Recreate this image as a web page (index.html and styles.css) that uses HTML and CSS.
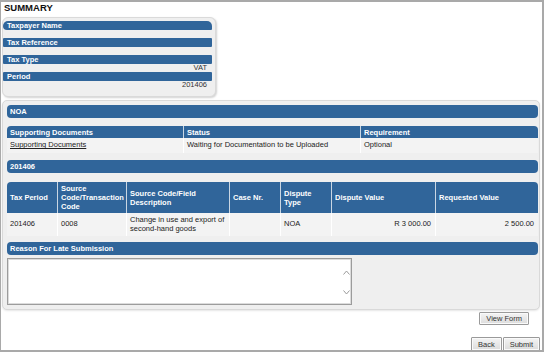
FILE: index.html
```html
<!DOCTYPE html>
<html lang="en">
<head>
    <meta charset="UTF-8">
    <meta name="viewport" content="width=device-width, initial-scale=1.0">
    <title>Summary - Dispute</title>
    <link rel="stylesheet" href="styles.css">
</head>
<body>
<div class="page">
    <h1 class="title">SUMMARY</h1>

    <div class="summary">
        <div class="sum-bar sum-bar-first">Taxpayer Name</div>
        <div class="sum-value"></div>
        <div class="sum-bar">Tax Reference</div>
        <div class="sum-value"></div>
        <div class="sum-bar">Tax Type</div>
        <div class="sum-value">VAT</div>
        <div class="sum-bar">Period</div>
        <div class="sum-value">201406</div>
    </div>

    <div class="panel">
        <div class="section-bar">NOA</div>

        <table class="grid docs">
            <colgroup>
                <col style="width:176px">
                <col style="width:177px">
                <col>
            </colgroup>
            <tr class="head-row">
                <th>Supporting Documents</th>
                <th>Status</th>
                <th>Requirement</th>
            </tr>
            <tr class="data-row">
                <td><a href="#">Supporting Documents</a></td>
                <td>Waiting for Documentation to be Uploaded</td>
                <td>Optional</td>
            </tr>
        </table>

        <div class="section-bar bar-period">201406</div>

        <table class="grid dispute">
            <colgroup>
                <col style="width:50px">
                <col style="width:69px">
                <col style="width:103px">
                <col style="width:51px">
                <col style="width:51px">
                <col style="width:104px">
                <col>
            </colgroup>
            <tr class="head-row">
                <th>Tax Period</th>
                <th>Source Code/Transaction Code</th>
                <th>Source Code/Field Description</th>
                <th>Case Nr.</th>
                <th>Dispute Type</th>
                <th>Dispute Value</th>
                <th>Requested Value</th>
            </tr>
            <tr class="data-row">
                <td>201406</td>
                <td>0008</td>
                <td>Change in use and export of second-hand goods</td>
                <td></td>
                <td>NOA</td>
                <td class="num">R 3 000.00</td>
                <td class="num">2 500.00</td>
            </tr>
        </table>

        <div class="section-bar bar-reason">Reason For Late Submission</div>

        <div class="reason-box">
            <textarea class="reason-text"></textarea>
            <div class="scroll">
                <svg width="7" height="5" viewBox="0 0 7 5"><path d="M0.5 4.5 L3.5 1 L6.5 4.5" fill="none" stroke="#9a9a9a" stroke-width="1"/></svg>
                <svg width="7" height="5" viewBox="0 0 7 5"><path d="M0.5 0.5 L3.5 4 L6.5 0.5" fill="none" stroke="#9a9a9a" stroke-width="1"/></svg>
            </div>
        </div>
    </div>

    <div class="actions actions-view">
        <button class="btn">View Form</button>
    </div>
    <div class="actions actions-nav">
        <button class="btn">Back</button>
        <button class="btn">Submit</button>
    </div>
</div>
</body>
</html>
```

FILE: styles.css
```css
/* Reset */
body, html {
    margin: 0;
    padding: 0;
    font-family: "Liberation Sans", Arial, sans-serif;
    color: #222;
}

.page {
    width: 544px;
    height: 352px;
    box-sizing: border-box;
    border: 2px solid #a9a9a9;
    border-left-width: 1px;
    overflow: hidden;
    background: #fff;
}

.title {
    margin: 0 0 3px 0;
    padding-left: 3px;
    font-size: 9.5px;
    line-height: 12px;
    font-weight: bold;
    color: #111;
}

/* summary card */
.summary {
    width: 214px;
    box-sizing: border-box;
    margin-left: 1px;
    padding: 3px 3px 7px 0;
    background: #efefef;
    border: 1px solid #dadada;
    border-radius: 6px;
    box-shadow: 1px 1px 2px rgba(0, 0, 0, 0.18);
}

.sum-bar {
    height: 9px;
    line-height: 9px;
    padding-left: 4px;
    background: #30659a;
    color: #fff;
    font-size: 7.5px;
    font-weight: bold;
    border-radius: 1px;
}

.sum-bar-first {
    border-radius: 5px 5px 1px 4px;
}

.sum-value {
    height: 8px;
    line-height: 8px;
    padding-right: 5px;
    text-align: right;
    font-size: 7.5px;
    color: #333;
}

/* main panel */
.panel {
    width: 538px;
    box-sizing: border-box;
    margin: 3px 0 0 1px;
    padding: 4px 1px 4px 4px;
    background: #efefef;
    border: 1px solid #d9d9d9;
    border-radius: 5px;
    box-shadow: 0 1px 2px rgba(0, 0, 0, 0.1);
}

.section-bar {
    height: 13px;
    line-height: 13px;
    padding-left: 3px;
    background: #30659a;
    color: #fff;
    font-size: 7.5px;
    font-weight: bold;
    border-radius: 4px;
}

.bar-period {
    margin-top: 7px;
}

.bar-reason {
    margin-top: 6px;
}

.grid {
    width: 100%;
    table-layout: fixed;
    border-collapse: separate;
    border-spacing: 0;
    font-size: 7.5px;
}

.docs {
    margin-top: 8px;
}

.dispute {
    margin-top: 9px;
}

.grid th {
    background: #30659a;
    color: #fff;
    font-weight: bold;
    text-align: left;
    vertical-align: middle;
    padding: 0 2px 0 3px;
    line-height: 9px;
    border-left: 1px solid #c9d6e3;
}

.grid th:first-child {
    border-left: none;
    border-top-left-radius: 4px;
}

.grid th:last-child {
    border-top-right-radius: 4px;
}

.grid td {
    background: #f3f3f3;
    padding: 0 4px 0 3px;
    line-height: 8.5px;
    vertical-align: middle;
    border-left: 1px solid #fff;
    color: #222;
}

.grid td:first-child {
    border-left: none;
}

.grid td.num {
    text-align: right;
}

.grid td a {
    color: #222;
    text-decoration: underline;
}

.docs .head-row {
    height: 12px;
}

.docs .data-row {
    height: 15px;
}

.dispute .head-row {
    height: 31px;
}

.dispute .data-row {
    height: 23px;
}

/* reason textarea */
.reason-box {
    display: flex;
    width: 345px;
    height: 47px;
    box-sizing: border-box;
    margin-top: 3px;
    background: #fff;
    border: 1px solid #9c9c9c;
    box-shadow: inset 0 0 0 1px #dcdcdc;
}

.reason-text {
    flex: 1;
    border: none;
    resize: none;
    outline: none;
    background: transparent;
    padding: 2px;
    font-size: 7.5px;
    font-family: "Liberation Sans", Arial, sans-serif;
}

.scroll {
    width: 10px;
    display: flex;
    flex-direction: column;
    justify-content: space-between;
    align-items: center;
    padding: 11px 0 9px 0;
}

.scroll svg {
    display: block;
}

/* buttons */
.actions {
    display: flex;
    justify-content: flex-end;
    gap: 1px;
}

.actions-view {
    margin-top: 2px;
    padding-right: 13px;
}

.actions-nav {
    margin-top: 12px;
    padding-right: 2px;
}

.btn {
    height: 13px;
    padding: 0 6px;
    margin: 0;
    font-size: 7.5px;
    line-height: 11px;
    font-family: "Liberation Sans", Arial, sans-serif;
    color: #333;
    background: linear-gradient(#f4f4f4, #dcdcdc);
    border: 1px solid #9a9a9a;
    border-radius: 1px;
    box-shadow: inset 0 0 0 1px #fafafa;
    cursor: pointer;
}

.actions-nav .btn {
    height: 14px;
}

.btn:hover {
    background: linear-gradient(#eaf4fc, #d4e6f6);
}
```
